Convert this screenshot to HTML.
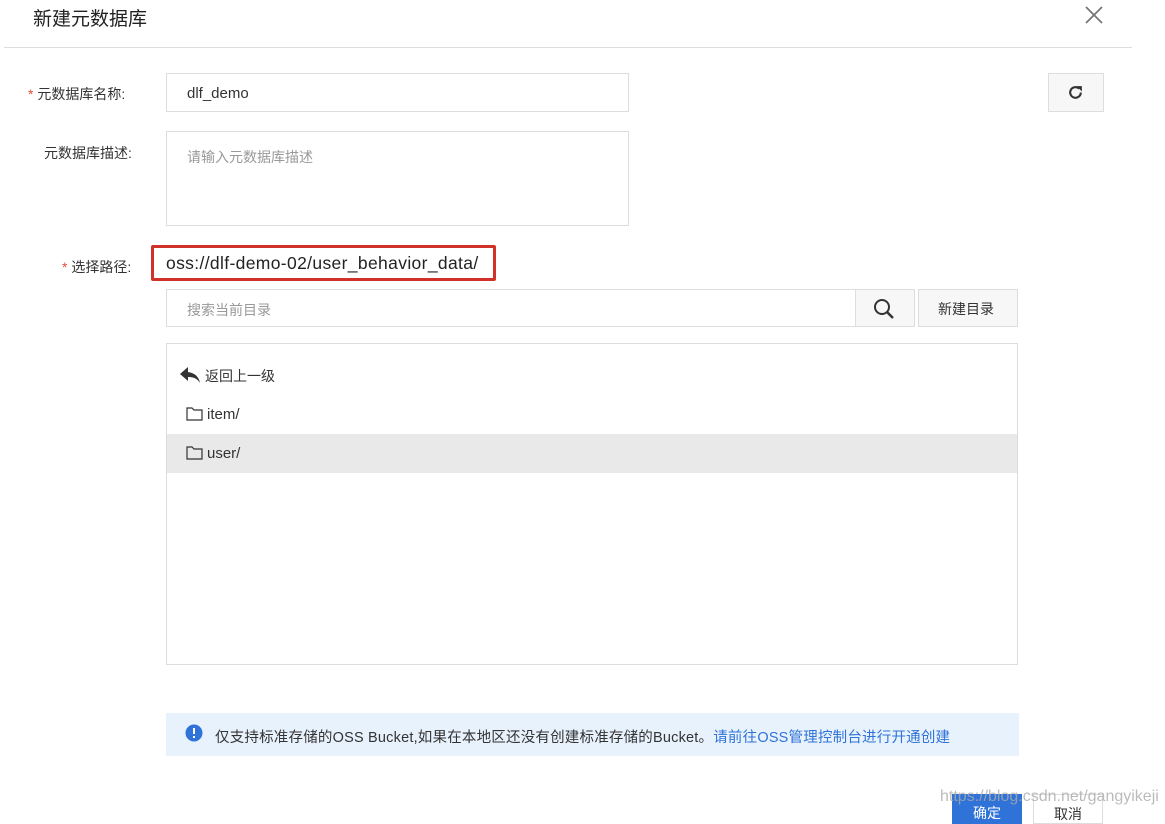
<!DOCTYPE html><html><head><meta charset="utf-8"><style>
*{box-sizing:border-box;margin:0;padding:0}
body{width:1165px;height:816px;background:#fff;font-family:"Liberation Sans","Noto Sans CJK SC",sans-serif;color:#333;position:relative;overflow:hidden;font-size:14px}
.a{position:absolute}
.lbl{font-size:14px;color:#333}
.star{color:#e34d3b}
.box{border:1px solid #ddd;background:#fff}
</style></head><body>
<div class="a" style="left:33px;top:4px;font-size:19px;color:#222">新建元数据库</div>
<svg class="a" style="left:1085px;top:6px" width="18" height="18" viewBox="0 0 18 18"><path d="M1 1L17 17M17 1L1 17" stroke="#777" stroke-width="1.8"/></svg>
<div class="a" style="left:4px;top:47px;width:1128px;height:1px;background:#ddd"></div>

<div class="a lbl" style="left:28px;top:84px"><span class="star">* </span>元数据库名称:</div>
<div class="a box" style="left:166px;top:73px;width:463px;height:39px"></div>
<div class="a" style="left:187px;top:85px;font-size:15px">dlf_demo</div>
<div class="a box" style="left:1048px;top:73px;width:56px;height:39px;background:#f7f7f7"></div>
<svg class="a" style="left:1067px;top:84px" width="17" height="17" viewBox="0 0 16 16"><path d="M13 8A5 5 0 1 1 11.5 4.4" fill="none" stroke="#333" stroke-width="2"/><path d="M9 2h5v5z" fill="#333"/></svg>

<div class="a lbl" style="left:44px;top:143px">元数据库描述:</div>
<div class="a box" style="left:166px;top:131px;width:463px;height:95px"></div>
<div class="a" style="left:187px;top:147px;color:#999">请输入元数据库描述</div>

<div class="a lbl" style="left:62px;top:257px"><span class="star">* </span>选择路径:</div>
<div class="a" style="left:151px;top:245px;width:345px;height:36px;border:3px solid #d0322a;border-radius:2px"></div>
<div class="a" style="left:166px;top:253px;font-size:17.5px;letter-spacing:0.35px;color:#222">oss://dlf-demo-02/user_behavior_data/</div>

<div class="a box" style="left:166px;top:289px;width:690px;height:38px"></div>
<div class="a" style="left:187px;top:300px;color:#999">搜索当前目录</div>
<div class="a box" style="left:855px;top:289px;width:60px;height:38px;background:#f7f7f7"></div>
<svg class="a" style="left:873px;top:298px" width="22" height="22" viewBox="0 0 22 22"><circle cx="9" cy="9" r="7" fill="none" stroke="#333" stroke-width="2"/><path d="M14 14l6 6" stroke="#333" stroke-width="2.4"/></svg>
<div class="a box" style="left:918px;top:289px;width:100px;height:38px;background:#f7f7f7"></div>
<div class="a" style="left:938px;top:299px">新建目录</div>

<div class="a box" style="left:166px;top:343px;width:852px;height:322px"></div>
<svg class="a" style="left:179px;top:366px" width="22" height="18" viewBox="0 0 22 18"><path d="M9 1L1 8l8 7v-4c5 0 9 1 12 6-1-6-5-10-12-11z" fill="#333"/></svg>
<div class="a" style="left:205px;top:366px">返回上一级</div>
<svg class="a" style="left:186px;top:407px" width="17" height="14" viewBox="0 0 17 14"><path d="M1 1h5l2 2h8v10H1z" fill="none" stroke="#333" stroke-width="1.2"/></svg>
<div class="a" style="left:207px;top:406px;font-size:15px">item/</div>
<div class="a" style="left:167px;top:434px;width:850px;height:39px;background:#e9e9e9"></div>
<svg class="a" style="left:186px;top:446px" width="17" height="14" viewBox="0 0 17 14"><path d="M1 1h5l2 2h8v10H1z" fill="none" stroke="#333" stroke-width="1.2"/></svg>
<div class="a" style="left:207px;top:445px;font-size:15px">user/</div>

<div class="a" style="left:166px;top:713px;width:853px;height:43px;background:#e8f2fd"></div>
<svg class="a" style="left:185px;top:724px" width="18" height="18" viewBox="0 0 18 18"><circle cx="9" cy="9" r="8.5" fill="#2f73d8"/><rect x="8" y="4" width="2" height="6" fill="#fff"/><rect x="8" y="12" width="2" height="2" fill="#fff"/></svg>
<div class="a" style="left:215px;top:726px;font-size:14.5px;letter-spacing:0.2px;color:#333;white-space:nowrap">仅支持标准存储的OSS Bucket,如果在本地区还没有创建标准存储的Bucket。<span style="color:#2f73d8">请前往OSS管理控制台进行开通创建</span></div>

<div class="a" style="left:952px;top:794px;width:70px;height:30px;background:#2f73d8;color:#fff;text-align:center;padding-top:9px">确定</div>
<div class="a box" style="left:1033px;top:794px;width:70px;height:30px;text-align:center;padding-top:9px">取消</div>
<div class="a" style="left:940px;top:788px;font-size:16px;color:rgba(170,170,170,.8)">https://blog.csdn.net/gangyikeji</div>
</body></html>
